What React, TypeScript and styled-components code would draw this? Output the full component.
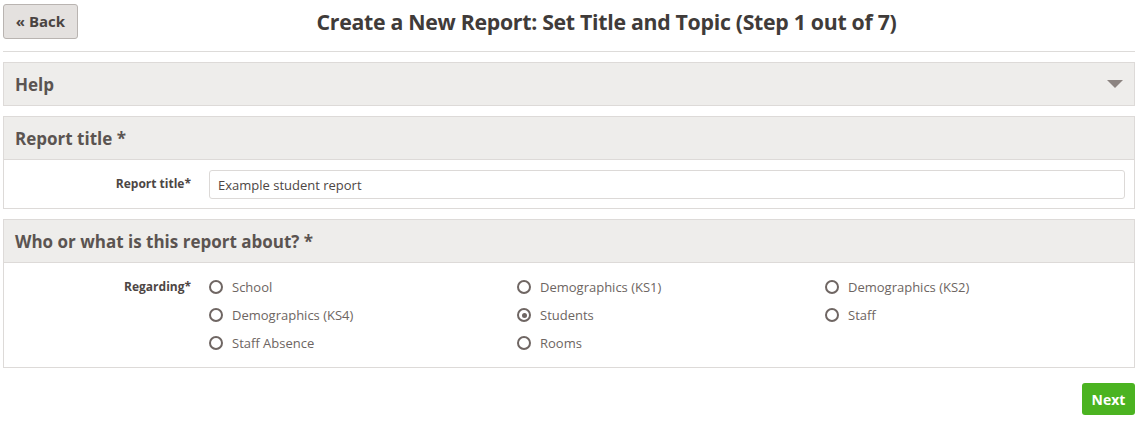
import React from "react";
import styled, { createGlobalStyle } from "styled-components";

const GlobalStyle = createGlobalStyle`
  * { box-sizing: border-box; }
  body {
    margin: 0;
    background: #fff;
    font-family: "Open Sans", "Liberation Sans", sans-serif;
    color: #5b5451;
  }
`;

const regarding = [
  { label: "School", checked: false },
  { label: "Demographics (KS1)", checked: false },
  { label: "Demographics (KS2)", checked: false },
  { label: "Demographics (KS4)", checked: false },
  { label: "Students", checked: true },
  { label: "Staff", checked: false },
  { label: "Staff Absence", checked: false },
  { label: "Rooms", checked: false },
];

const App = () => {
  return (
    <>
      <GlobalStyle />
      <Page>
        <TopBar>
          <BackButton>« Back</BackButton>
          <Title>Create a New Report: Set Title and Topic (Step 1 out of 7)</Title>
        </TopBar>
        <Divider />
        <Panel>
          <PanelHeader>
            <span>Help</span>
            <Caret />
          </PanelHeader>
        </Panel>
        <Panel>
          <PanelHeader>Report title *</PanelHeader>
          <PanelBody>
            <FieldRow>
              <FieldLabel>Report title*</FieldLabel>
              <TextInput defaultValue="Example student report" />
            </FieldRow>
          </PanelBody>
        </Panel>
        <Panel>
          <PanelHeader>Who or what is this report about? *</PanelHeader>
          <PanelBody $tall>
            <FieldRow>
              <FieldLabel>Regarding*</FieldLabel>
              <RadioGrid>
                {regarding.map((r) => (
                  <RadioOption key={r.label}>
                    <RadioCircle $checked={r.checked} />
                    {r.label}
                  </RadioOption>
                ))}
              </RadioGrid>
            </FieldRow>
          </PanelBody>
        </Panel>
        <Footer>
          <NextButton>Next</NextButton>
        </Footer>
      </Page>
    </>
  );
};

const Page = styled.div`
  width: 1142px;
  padding: 4px 7px 0 3px;
`;

const TopBar = styled.div`
  display: flex;
  align-items: center;
  height: 34px;
`;

const BackButton = styled.button`
  width: 75px;
  height: 35px;
  font: inherit;
  font-size: 15px;
  font-weight: 700;
  color: #4a4442;
  background: #e4e1df;
  border: 1px solid #b9b4b1;
  border-radius: 3px;
  padding: 0;
`;

const Title = styled.h1`
  flex: 1;
  margin: 0;
  text-align: center;
  font-size: 21.3px;
  font-weight: 700;
  color: #403b39;
  letter-spacing: -0.3px;
`;

const Divider = styled.hr`
  border: 0;
  border-top: 1px solid #dddbd9;
  margin: 13px 0 10px;
`;

const Panel = styled.section`
  border: 1px solid #dddad8;
  margin-bottom: 10px;
`;

const PanelHeader = styled.div`
  display: flex;
  align-items: center;
  justify-content: space-between;
  height: 42px;
  padding: 0 11px 0 11px;
  background: #eeedeb;
  font-size: 17px;
  font-weight: 700;
  color: #5b5451;
`;

const Caret = styled.span`
  width: 0;
  height: 0;
  border-left: 8px solid transparent;
  border-right: 8px solid transparent;
  border-top: 8px solid #8c8481;
`;

const PanelBody = styled.div<{ $tall?: boolean }>`
  border-top: 1px solid #dddad8;
  padding: ${(p) => (p.$tall ? "10px 0 10px" : "10px 0 9px")};
`;

const FieldRow = styled.div`
  display: flex;
  align-items: flex-start;
`;

const FieldLabel = styled.label`
  width: 187px;
  flex-shrink: 0;
  text-align: right;
  font-size: 12px;
  font-weight: 700;
  color: #4d4644;
  line-height: 28px;
`;

const TextInput = styled.input`
  margin-left: 18px;
  width: 916px;
  height: 29px;
  border: 1px solid #dcd9d7;
  border-radius: 3px;
  padding: 0 8px;
  font: inherit;
  font-size: 13px;
  color: #4d4644;
  outline: none;
`;

const RadioGrid = styled.div`
  margin-left: 18px;
  display: grid;
  grid-template-columns: repeat(3, 308px);
  grid-auto-rows: 28px;
`;

const RadioOption = styled.div`
  display: flex;
  align-items: center;
  gap: 9px;
  font-size: 13px;
  color: #6d6562;
`;

const RadioCircle = styled.span<{ $checked: boolean }>`
  width: 14px;
  height: 14px;
  border-radius: 50%;
  border: 2px solid #6f6663;
  display: flex;
  align-items: center;
  justify-content: center;
  &::after {
    content: "";
    width: 5px;
    height: 5px;
    border-radius: 50%;
    background: #6f6663;
    display: ${(p) => (p.$checked ? "block" : "none")};
  }
`;

const Footer = styled.div`
  display: flex;
  justify-content: flex-end;
  padding-top: 5px;
`;

const NextButton = styled.button`
  height: 32px;
  width: 53px;
  border: 0;
  border-radius: 3px;
  background: #4bb321;
  color: #fff;
  font: inherit;
  font-size: 14px;
  font-weight: 700;
  padding: 0;
`;

export default App;
